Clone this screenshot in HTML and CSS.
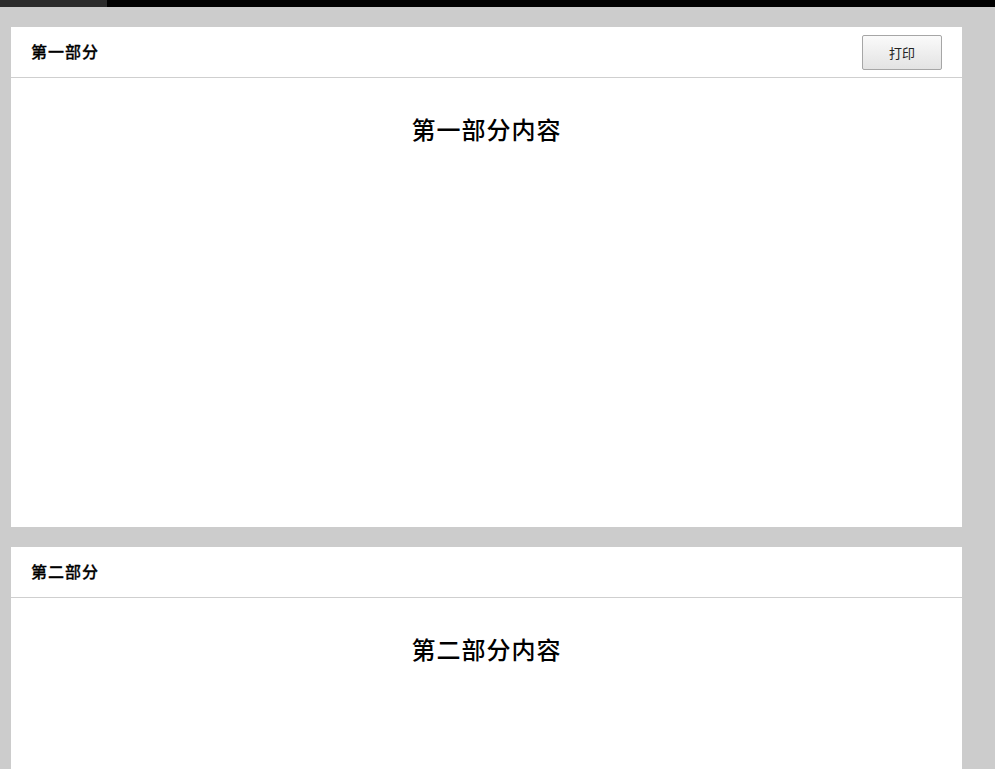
FILE: index.html
```html
<!DOCTYPE html>
<html lang="zh-CN">
<head>
<meta charset="utf-8">
<title>打印</title>
<link rel="stylesheet" href="styles.css">
</head>
<body>
<div class="topbar"><div class="topbar-tab"></div></div>
<div class="page">
  <section class="card">
    <header class="card-head">
      <span class="card-title">第一部分</span>
      <button class="btn" type="button">打印</button>
    </header>
    <div class="card-body">
      <h2 class="content-title">第一部分内容</h2>
    </div>
  </section>
  <section class="card">
    <header class="card-head">
      <span class="card-title">第二部分</span>
    </header>
    <div class="card-body">
      <h2 class="content-title">第二部分内容</h2>
    </div>
  </section>
</div>
</body>
</html>
```

FILE: styles.css
```css
html, body {
  margin: 0;
  padding: 0;
  background: #cccccc;
  font-family: "Noto Sans CJK SC", "Liberation Sans", sans-serif;
  color: #000;
}
.topbar {
  height: 7px;
  background: #000;
  display: flex;
}
.topbar-tab {
  width: 107px;
  background: #2b2b2b;
}
.page {
  padding: 20px 33px 0 11px;
  display: flex;
  flex-direction: column;
  gap: 20px;
}
.card {
  background: #fff;
  height: 500px;
  display: flex;
  flex-direction: column;
}
.card-head {
  height: 51px;
  box-sizing: border-box;
  border-bottom: 1px solid #cfcfcf;
  display: flex;
  align-items: center;
  justify-content: space-between;
  padding: 0 20px;
}
.card-title {
  font-size: 16px;
  font-weight: 500;
  line-height: 20px;
  letter-spacing: 1px;
  margin-top: -2px;
  -webkit-text-stroke: 0.3px #000;
}
.btn {
  width: 80px;
  height: 35px;
  border: 1px solid #a6a6a6;
  border-radius: 2px;
  background: linear-gradient(#fafafa, #e3e3e3);
  font-family: "Noto Sans CJK SC", sans-serif;
  font-size: 13px;
  color: #222;
  padding: 0;
}
.card-body {
  flex: 1;
  padding-top: 36px;
}
.content-title {
  margin: 0;
  text-align: center;
  font-size: 24px;
  font-weight: 500;
  line-height: 30px;
  letter-spacing: 1px;
}
```
